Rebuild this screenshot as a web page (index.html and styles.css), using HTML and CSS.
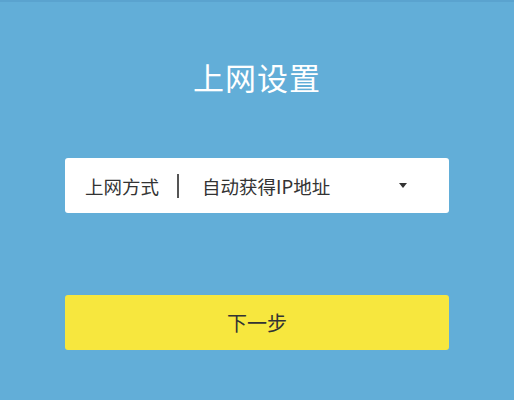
FILE: index.html
```html
<!DOCTYPE html>
<html lang="zh-CN">
<head>
  <meta charset="UTF-8" />
  <meta name="viewport" content="width=device-width, initial-scale=1.0"/>
  <title>上网设置</title>
  <link rel="stylesheet" href="styles.css">
</head>
<body>
  <div class="page">
    <h2 class="title">上网设置</h2>

    <div class="field">
      <span class="label">上网方式</span>
      <span class="divider"></span>
      <span class="value">自动获得IP地址</span>
      <span class="arrow"></span>
    </div>

    <button class="next">下一步</button>
  </div>
</body>
</html>
```

FILE: styles.css
```css
html, body { margin: 0; height: 100%; }
body { background: #62aed8; font-family: "Noto Sans CJK SC", "Noto Sans", sans-serif; border-top: 2px solid #5aa3cf; box-sizing: border-box; }
.page { width: 384px; margin: 0 auto; padding-top: 52px; }
.title { margin: 0; text-align: center; color: #fff; font-size: 31px; font-weight: 400; line-height: 46px; letter-spacing: 1px; }
.field { display: flex; align-items: center; height: 55px; margin-top: 58px; background: #fff; border-radius: 3px; padding: 0 20px; box-sizing: border-box; color: #333; font-size: 18.5px; }
.divider { width: 2px; height: 24px; background: #555; margin: 0 23px 0 18px; }
.value { flex: 1; }
.arrow { width: 0; height: 0; border-left: 4px solid transparent; border-right: 4px solid transparent; border-top: 5px solid #333; margin-right: 22px; }
.next { display: block; width: 100%; height: 55px; margin-top: 82px; border: none; border-radius: 3px; background: #f7e73e; color: #333; font-family: inherit; font-size: 20px; }
```
